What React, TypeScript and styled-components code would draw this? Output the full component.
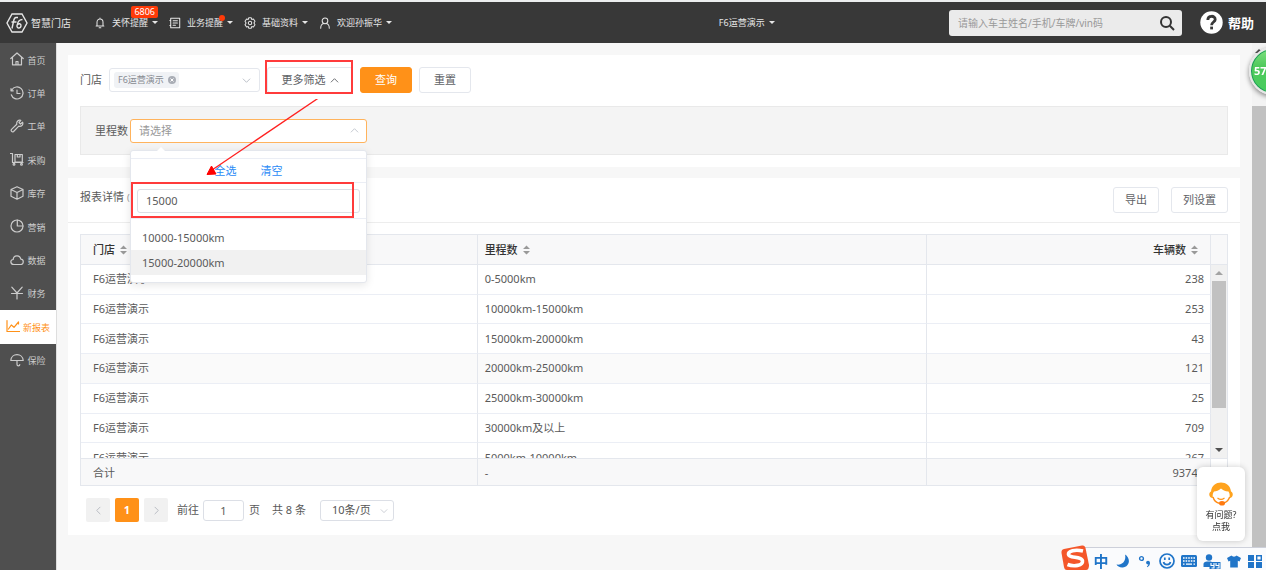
import React from "react";
import styled, { createGlobalStyle, css } from "styled-components";

const ORANGE = "#ff9118";
const BORDER = "#e4e7ed";
const MARK = "#ff3b3b";

const GlobalStyle = createGlobalStyle`
  * { box-sizing: border-box; }
  body {
    margin: 0;
    background: #f7f7f7;
    color: #5a5a5a;
    font-family: "Noto Sans", "Noto Sans CJK SC", sans-serif;
    font-size: 11px;
    line-height: 16px;
  }
  button, input, select { font: inherit; color: inherit; margin: 0; }
  button { cursor: pointer; white-space: nowrap; }
  a { text-decoration: none; color: inherit; }
`;

const Page = styled.div`
  display: flex;
  flex-direction: column;
  min-height: 100vh;
  overflow: hidden;
`;

/* ---------- top bar ---------- */

const TopBar = styled.header`
  display: flex;
  align-items: center;
  height: 43px;
  padding: 0 12px 0 6px;
  border-top: 2px solid #eceeef;
  background: #383838;
  color: #e6e6e6;
  font-size: 9px;
`;

const Brand = styled.a`
  display: flex;
  align-items: center;
  gap: 3px;
  width: 88px;
  font-size: 10px;
`;

const TopNav = styled.nav`
  display: flex;
  gap: 11px;
`;

const TopItem = styled.button`
  position: relative;
  display: flex;
  align-items: center;
  padding: 0;
  border: 0;
  background: none;
  svg:first-child { margin-right: 6px; }
`;

const Caret = styled.span`
  margin-left: 4px;
  border: 3px solid transparent;
  border-top-color: currentColor;
  border-bottom: 0;
`;

const CountBadge = styled.span`
  position: absolute;
  top: -9px;
  right: 0;
  padding: 0 3px;
  border-radius: 2px;
  background: #ff3a08;
  color: #fff;
  font-size: 9px;
  line-height: 12px;
`;

const DotBadge = styled.span`
  position: absolute;
  top: 0;
  right: 8px;
  width: 6px;
  height: 6px;
  border-radius: 50%;
  background: #ff3a08;
`;

const Spacer = styled.div<{ $grow: number }>`
  flex: ${(p) => p.$grow} 1 0;
`;

const SearchBox = styled.form`
  display: flex;
  align-items: center;
  width: 233px;
  height: 26px;
  margin-right: 18px;
  padding: 0 7px 0 9px;
  border-radius: 3px;
  background: #ebebeb;
  input {
    flex: 1;
    min-width: 0;
    padding: 0;
    border: 0;
    outline: 0;
    background: none;
    color: #333;
    font-size: 10px;
    &::placeholder { color: #999; opacity: 1; }
  }
  button {
    display: flex;
    padding: 0;
    border: 0;
    background: none;
    color: #333;
  }
`;

const Help = styled.a`
  display: flex;
  align-items: center;
  gap: 5px;
  color: #fff;
  font-size: 13px;
  font-weight: 700;
`;

/* ---------- frame ---------- */

const Body = styled.div`
  display: flex;
  flex: 1;
`;

const Sidebar = styled.aside`
  flex: none;
  width: 57px;
  border-right: 1px solid #dedede;
  background: #4f4f4f;
`;

const SideNav = styled.nav`
  display: grid;
  grid-auto-rows: 1fr;
  height: 334px;
`;

const SideLink = styled.a<{ $active?: boolean }>`
  display: flex;
  align-items: center;
  justify-content: center;
  gap: 3px;
  padding-top: 2px;
  color: #ccc;
  font-size: 9px;
  svg { flex: none; margin-bottom: 3px; }
  ${(p) => p.$active && css`background: #fff; color: ${ORANGE};`}
`;

const Main = styled.main`
  display: flex;
  flex: 1;
  flex-direction: column;
  gap: 11px;
  min-width: 0;
  padding: 12px 12px 35px 11px;
`;

const PageScroll = styled.div`
  display: flex;
  flex: none;
  flex-direction: column;
  width: 14px;
  background: #f3f3f3;
`;

const PageScrollTop = styled.div`
  height: 63px;
  padding: 6px 3px;
  &::before {
    content: "";
    display: block;
    width: 0;
    border: 4px solid transparent;
    border-top: 0;
    border-bottom-color: #505050;
  }
`;

const PageThumb = styled.div`
  flex: 1;
  background: #c1c1c1;
`;

const Card = styled.section`
  background: #fff;
`;

/* ---------- filters ---------- */

const FilterCard = styled(Card)`
  padding: 12px;
`;

const FilterRow = styled.div`
  display: flex;
  align-items: center;
  gap: 7px;
  margin-bottom: 13px;
`;

const StoreSelect = styled.div`
  display: flex;
  align-items: center;
  justify-content: space-between;
  width: 151px;
  height: 24px;
  padding: 0 8px 0 4px;
  border: 1px solid ${BORDER};
  border-radius: 3px;
  color: #b5bac3;
`;

const Tag = styled.span`
  display: flex;
  align-items: center;
  gap: 4px;
  height: 16px;
  padding: 0 3px 0 4px;
  border-radius: 3px;
  background: #f0f2f5;
  color: #878b92;
  font-size: 9px;
  button {
    display: flex;
    padding: 0;
    border: 0;
    background: none;
  }
`;

const Button = styled.button<{ $primary?: boolean; $width: number }>`
  position: relative;
  display: flex;
  align-items: center;
  justify-content: center;
  gap: 4px;
  width: ${(p) => p.$width}px;
  height: 26px;
  padding: 0;
  border: 1px solid ${(p) => (p.$primary ? ORANGE : BORDER)};
  border-radius: 3px;
  background: ${(p) => (p.$primary ? ORANGE : "#fff")};
  color: ${(p) => (p.$primary ? "#fff" : "#606266")};
`;

const MarkBox = styled.span<{ $inset: string }>`
  position: absolute;
  inset: ${(p) => p.$inset};
  border: 2px solid ${MARK};
  pointer-events: none;
`;

const MarkArrow = styled.svg`
  position: absolute;
  top: -20px;
  left: 76px;
  z-index: 5;
  pointer-events: none;
`;

const MorePanel = styled.div`
  display: flex;
  align-items: center;
  gap: 2px;
  height: 49px;
  padding: 0 14px;
  border: 1px solid #e9e9e9;
  background: #f4f4f4;
`;

const Picker = styled.div`
  position: relative;
  width: 237px;
`;

const PickerField = styled.div`
  display: flex;
  align-items: center;
  height: 24px;
  padding: 0 7px 0 8px;
  border: 1px solid #ffb35c;
  border-radius: 3px;
  background: #fff;
  color: #c0c4cc;
  input {
    flex: 1;
    min-width: 0;
    padding: 0;
    border: 0;
    outline: 0;
    background: none;
    &::placeholder { color: #999; opacity: 1; }
  }
`;

const Popup = styled.div`
  position: absolute;
  top: 31px;
  left: 0;
  z-index: 3;
  width: 237px;
  padding: 7px 0;
  border: 1px solid ${BORDER};
  border-radius: 3px;
  background: #fff;
  box-shadow: 0 2px 9px rgba(0, 0, 0, 0.1);
  &::before {
    content: "";
    position: absolute;
    top: -4px;
    left: 26px;
    border: 4px solid transparent;
    border-top: 0;
    border-bottom-color: #fff;
  }
`;

const PopupActions = styled.div`
  display: flex;
  justify-content: center;
  gap: 24px;
  padding: 4px 0 3px;
  border: 1px solid #ebeef5;
  border-width: 1px 0;
  button {
    padding: 0;
    border: 0;
    background: none;
    color: #2a8af6;
  }
`;

const PopupSearch = styled.div`
  position: relative;
  padding: 6px 6px 5px;
  border-bottom: 1px solid #ebeef5;
  input {
    width: 100%;
    height: 24px;
    padding: 0 8px;
    border: 1px solid #dcdfe6;
    border-radius: 3px;
    outline: 0;
  }
`;

const OptionList = styled.ul`
  margin: 0;
  padding: 6px 0 0;
  list-style: none;
`;

const Option = styled.li<{ $hover?: boolean }>`
  padding: 0 11px;
  background: ${(p) => (p.$hover ? "#f1f1f1" : "none")};
  line-height: 25px;
`;

/* ---------- report ---------- */

const ReportHead = styled.div`
  display: flex;
  align-items: center;
  gap: 12px;
  height: 45px;
  padding: 0 12px;
  border-bottom: 1px solid #ededed;
`;

const ReportTitle = styled.h2`
  flex: 1;
  margin: 0;
  padding-bottom: 6px;
  font-size: 11px;
  font-weight: 400;
  small { color: #999; font-size: 9px; }
`;

const ReportBody = styled.div`
  padding: 11px 12px 12px;
`;

const Grid = styled.div`
  border: 1px solid ${BORDER};
`;

const GridPart = styled.div<{ $height: number; $shaded?: boolean; $line?: boolean }>`
  display: flex;
  align-items: flex-start;
  height: ${(p) => p.$height}px;
  overflow: hidden;
  border-bottom: ${(p) => (p.$line ? 1 : 0)}px solid ${BORDER};
  background: ${(p) => (p.$shaded ? "#f8f8f9" : "#fff")};
`;

const Table = styled.table<{ $height: number }>`
  flex: 1;
  width: 0;
  height: ${(p) => p.$height}px;
  table-layout: fixed;
  border-collapse: separate;
  border-spacing: 0;
  th, td {
    padding: 0 6px 0 12px;
    border-right: 1px solid ${BORDER};
    text-align: left;
    font-weight: 400;
  }
  th { color: #333; font-weight: 500; }
  td + td, th + th { padding-left: 7px; }
  th:last-child, td:last-child { text-align: right; }
  th:last-child { padding-right: 12px; }
  tbody td { border-bottom: 1px solid #ebeef5; }
  tbody tr:nth-child(4) { background: #fafafa; }
`;

const Sort = styled.svg`
  margin-left: 5px;
  vertical-align: -1px;
`;

const Gutter = styled.div<{ $plain?: boolean }>`
  flex: none;
  align-self: stretch;
  width: 16px;
  background: ${(p) => (p.$plain ? "#fff" : "none")};
`;

const InnerScroll = styled(Gutter)`
  display: flex;
  flex-direction: column;
  align-items: center;
  background: #f1f1f1;
`;

const ScrollArrow = styled.span<{ $down?: boolean }>`
  display: flex;
  align-items: center;
  height: 16px;
  &::before {
    content: "";
    border: 4px solid transparent;
    ${(p) => (p.$down
      ? css`border-top-color: #505050; border-bottom: 0;`
      : css`border-bottom-color: #a3a3a3; border-top: 0;`)}
  }
`;

const InnerThumb = styled.div`
  width: 14px;
  height: 127px;
  margin-bottom: auto;
  background: #c1c1c1;
`;

const Pager = styled.div`
  display: flex;
  align-items: center;
  gap: 5px;
  padding: 12px 6px 1px;
  label { display: flex; align-items: center; gap: 4px; margin-left: 4px; }
`;

const PageButton = styled.button<{ $current?: boolean }>`
  display: flex;
  align-items: center;
  justify-content: center;
  width: 24px;
  height: 24px;
  padding: 0;
  border: 0;
  border-radius: 2px;
  background: ${(p) => (p.$current ? ORANGE : "#f1f1f1")};
  color: ${(p) => (p.$current ? "#fff" : "#b4b8bf")};
  font-weight: 700;
`;

const PageInput = styled.input`
  width: 41px;
  height: 21px;
  padding: 0;
  border: 1px solid #dcdfe6;
  border-radius: 3px;
  text-align: center;
`;

const Total = styled.span`
  margin: 0 9px 0 7px;
`;

const SizeSelect = styled.div`
  position: relative;
  color: #c0c4cc;
  select {
    width: 74px;
    height: 21px;
    padding: 0 0 0 11px;
    border: 1px solid #dcdfe6;
    border-radius: 3px;
    background: #fff;
    color: #555;
    appearance: none;
  }
  svg { position: absolute; top: 7px; right: 6px; }
`;

/* ---------- floating parts ---------- */

const Ball = styled.div`
  position: fixed;
  top: 47px;
  right: -31px;
  z-index: 6;
  width: 48px;
  height: 48px;
  padding-left: 3px;
  border: 2px solid #e6e6e6;
  border-radius: 50%;
  background: linear-gradient(#7fe07f, #4fc95c 40%, #46cd5e);
  box-shadow: inset 0 0 0 1px #1d9a5a, 0 2px 5px rgba(0, 0, 0, 0.45);
  color: #fff;
  font-weight: 700;
  line-height: 44px;
`;

const Assistant = styled.button`
  position: fixed;
  right: 21px;
  bottom: 29px;
  z-index: 6;
  width: 48px;
  height: 74px;
  padding: 10px 0 4px;
  border: 0;
  border-radius: 6px;
  background: #fff;
  box-shadow: 0 0 6px rgba(0, 0, 0, 0.2);
  color: #333;
  font-size: 9px;
  line-height: 12px;
  svg { display: block; margin: 0 auto 3px; }
  span { display: block; }
`;

const ImeBar = styled.div`
  position: fixed;
  right: 0;
  bottom: 0;
  z-index: 7;
  display: flex;
  align-items: flex-end;
  color: #1f74c8;
`;

const ImeLogo = styled.svg`
  position: relative;
  z-index: 1;
`;

const ImeKeys = styled.div`
  display: flex;
  align-items: center;
  height: 23px;
  margin-left: -8px;
  padding: 4px 0 0 9px;
  border-top: 1px solid #cdd0da;
  background: #fafbfd;
`;

const ImeKey = styled.span<{ $width?: number }>`
  display: flex;
  align-items: center;
  justify-content: center;
  width: ${(p) => p.$width ?? 22}px;
  height: 18px;
  font-size: 15px;
  font-weight: 700;
`;

/* ---------- icons ---------- */

type IconProps = { size?: number; children: React.ReactNode };
const Line = ({ size = 14, children }: IconProps) => (
  <svg width={size} height={size} viewBox="0 0 14 14" fill="none" stroke="currentColor"
    strokeWidth="1.2" strokeLinecap="round" strokeLinejoin="round" aria-hidden="true">
    {children}
  </svg>
);

const Chevron = ({ up, size = 9 }: { up?: boolean; size?: number }) => (
  <svg width={size} height={size} viewBox="0 0 10 10" fill="none" stroke="currentColor" aria-hidden="true">
    <path d={up ? "M1 7L5 3L9 7" : "M1 3L5 7L9 3"} />
  </svg>
);

const SortMark = () => (
  <Sort width="7" height="10" viewBox="0 0 7 10" fill="#999" aria-hidden="true">
    <path d="M3.5 0.5L7 4H0ZM3.5 9.5L0 6H7Z" />
  </Sort>
);

const menu: { label: string; active?: boolean; icon: React.ReactNode }[] = [
  { label: "首页", icon: <path d="M0.8 6.5L7 1L13.2 6.5M2.5 5.5V12.8H11.5V5.5M6 12.5V9.5H8V12.5" /> },
  { label: "订单", icon: <path d="M1.8 4A6 6 0 1 1 1.3 8.8M1 2.5V4.8H3.3M7 4V7.5H10" /> },
  { label: "工单", icon: <path d="M12.6 3.2L10.5 5L9 3.6L10.8 1.4C8.5 0.6 6.2 2.5 6.8 5.2L1.5 10.4C0.4 11.8 2.2 13.6 3.6 12.5L8.8 7.2C11.6 7.8 13.5 5.5 12.6 3.2Z" /> },
  { label: "采购", icon: <><path d="M0.5 1.5H2.5V10.5H13M5 2.5H12.3V10H5ZM7.3 2.5V5H10V2.5" /><circle cx="4" cy="12.2" r="0.9" /><circle cx="11.5" cy="12.2" r="0.9" /></> },
  { label: "库存", icon: <path d="M7 0.8L13 3.5V10.3L7 13.2L1 10.3V3.5ZM1 3.5L7 6.5L13 3.5M7 6.5V13" /> },
  { label: "营销", icon: <><circle cx="7" cy="7" r="6" /><path d="M7.3 1V7H13" /></> },
  { label: "数据", icon: <path d="M3.8 11.5C0.2 11.5 -0.2 7 3.2 6.5C3.4 1.8 10 1.4 10.8 6.2C14.2 6.5 14 11.5 10.6 11.5Z" /> },
  { label: "财务", icon: <path d="M1.8 1.2L7 7L12.2 1.2M7 7V13M1.5 7.5H12.5" /> },
  { label: "新报表", active: true, icon: <path d="M1 1.5V12.5H13.5M2.5 10L5.3 6L8 8.3L12.5 3M12.5 3V5" /> },
  { label: "保险", icon: <path d="M0.8 7.5C1.2 -0.3 12.8 -0.3 13.2 7.5ZM7 7.5V11.5C7 13.4 9.8 13.4 9.8 11.5" /> },
];

const rows: [string, string][] = [
  ["0-5000km", "238"],
  ["10000km-15000km", "253"],
  ["15000km-20000km", "43"],
  ["20000km-25000km", "121"],
  ["25000km-30000km", "25"],
  ["30000km及以上", "709"],
  ["5000km-10000km", "267"],
];

const Columns = () => (
  <colgroup>
    <col style={{ width: "35.1%" }} />
    <col style={{ width: "39.8%" }} />
    <col />
  </colgroup>
);

const Header = () => (
  <TopBar>
    <Brand href="#">
      <svg width="22" height="20" viewBox="0 0 22 20" fill="none" stroke="currentColor" strokeWidth="1.4" aria-hidden="true">
        <path d="M6 1H16L21 10L16 19H6L1 10Z" />
        <path d="M12 4.5H10C8.6 4.5 8 6 7.6 8L6 15.5M5.5 9H10.5M16.5 6.5C13 6.5 11.5 9.5 11 12.5C10.6 15.8 14.6 15.6 15 12.8C15.3 10.4 12.4 10 11.4 12" />
      </svg>
      智慧门店
    </Brand>
    <TopNav>
      <TopItem>
        <Line size={12}><path d="M3.5 10.5V6C3.5 1.2 10.5 1.2 10.5 6V10.5ZM2.5 10.5H11.5M6 12.5H8M7 1.2V2.2" /></Line>
        关怀提醒<Caret />
        <CountBadge>6806</CountBadge>
      </TopItem>
      <TopItem>
        <Line size={12}><path d="M2 1.5H12.5V12.5H2ZM4.8 4.5H9.8M4.8 7H9.8M4.8 9.5H7.5M2 4H1M2 10H1" /></Line>
        业务提醒<Caret />
        <DotBadge />
      </TopItem>
      <TopItem>
        <Line size={12}>
          <path d="M5.5 1H8.5L9 2.8L11 2.3L12.8 5L11.6 7L12.8 9L11 11.7L9 11.2L8.5 13H5.5L5 11.2L3 11.7L1.2 9L2.4 7L1.2 5L3 2.3L5 2.8Z" />
          <circle cx="7" cy="7" r="2" />
        </Line>
        基础资料<Caret />
      </TopItem>
      <TopItem>
        <Line size={12}><circle cx="7" cy="4.5" r="3.3" /><path d="M2 13C2 9.5 4 7.8 5.5 7.5M12 13C12 9.5 10 7.8 8.5 7.5" /></Line>
        欢迎孙振华<Caret />
      </TopItem>
    </TopNav>
    <Spacer $grow={15} />
    <TopItem>F6运营演示<Caret /></TopItem>
    <Spacer $grow={8} />
    <SearchBox onSubmit={(e) => e.preventDefault()}>
      <input aria-label="搜索" placeholder="请输入车主姓名/手机/车牌/vin码" />
      <button aria-label="查找">
        <svg width="16" height="16" viewBox="0 0 16 16" fill="none" stroke="currentColor" strokeWidth="2" aria-hidden="true">
          <circle cx="7" cy="7" r="5" /><path d="M10.8 10.8L15 15" />
        </svg>
      </button>
    </SearchBox>
    <Help href="#">
      <svg width="23" height="23" viewBox="0 0 23 23" aria-hidden="true">
        <circle cx="11.5" cy="11.5" r="11.2" fill="#fff" />
        <path d="M7.8 9C7.8 4 15.4 4.2 15.2 8.6C15.1 11 11.6 11.2 11.6 14.2" fill="none" stroke="#383838" strokeWidth="2.8" />
        <path d="M10.2 15.6H13V18.4H10.2Z" fill="#383838" />
      </svg>
      帮助
    </Help>
  </TopBar>
);

const Filters = () => (
  <FilterCard>
    <FilterRow>
      <span>门店</span>
      <StoreSelect role="group" aria-label="门店">
        <Tag>
          F6运营演示
          <button aria-label="移除">
            <svg width="8" height="8" viewBox="0 0 8 8" aria-hidden="true">
              <circle cx="4" cy="4" r="4" fill="#a9adb5" />
              <path d="M2.5 2.5L5.5 5.5M5.5 2.5L2.5 5.5" stroke="#fff" />
            </svg>
          </button>
        </Tag>
        <Chevron />
      </StoreSelect>
      <Button $width={86}>
        更多筛选<Chevron up />
        <MarkBox $inset="-8px -1px -2px -3px" />
      </Button>
      <Button $width={52} $primary>查询</Button>
      <Button $width={52}>重置</Button>
    </FilterRow>
    <MorePanel>
      <label htmlFor="mileage">里程数</label>
      <Picker>
        <PickerField>
          <input id="mileage" placeholder="请选择" readOnly />
          <Chevron up />
        </PickerField>
        <Popup>
          <PopupActions>
            <button>全选</button>
            <button>清空</button>
          </PopupActions>
          <PopupSearch>
            <input aria-label="筛选选项" defaultValue="15000" />
            <MarkBox $inset="-1px 12px 0 0" />
          </PopupSearch>
          <OptionList>
            <Option>10000-15000km</Option>
            <Option $hover>15000-20000km</Option>
          </OptionList>
        </Popup>
        <MarkArrow width="114" height="78" viewBox="0 0 114 78" aria-hidden="true">
          <path d="M112.5 -1L6 71" stroke="#ff2020" strokeWidth="1.3" />
          <path d="M1 75.5L5.5 67L10 75Z" fill="#ff0000" stroke="#ff0000" />
        </MarkArrow>
      </Picker>
    </MorePanel>
  </FilterCard>
);

const Report = () => (
  <Card>
    <ReportHead>
      <ReportTitle>报表详情 <small>(旧</small></ReportTitle>
      <Button $width={46}>导出</Button>
      <Button $width={57}>列设置</Button>
    </ReportHead>
    <ReportBody>
      <Grid>
        <GridPart $height={30} $shaded $line>
          <Table $height={29}>
            <Columns />
            <thead>
              <tr>
                <th>门店<SortMark /></th>
                <th>里程数<SortMark /></th>
                <th>车辆数<SortMark /></th>
              </tr>
            </thead>
          </Table>
          <Gutter />
        </GridPart>
        <GridPart $height={194} $line>
          <Table $height={208}>
            <Columns />
            <tbody>
              {rows.map(([range, count]) => (
                <tr key={range}>
                  <td>F6运营演示</td>
                  <td>{range}</td>
                  <td>{count}</td>
                </tr>
              ))}
            </tbody>
          </Table>
          <InnerScroll>
            <ScrollArrow />
            <InnerThumb />
            <ScrollArrow $down />
          </InnerScroll>
        </GridPart>
        <GridPart $height={26} $shaded>
          <Table $height={27}>
            <Columns />
            <tfoot>
              <tr>
                <td>合计</td>
                <td>-</td>
                <td>93743</td>
              </tr>
            </tfoot>
          </Table>
          <Gutter $plain />
        </GridPart>
      </Grid>
      <Pager>
        <PageButton aria-label="上一页">
          <svg width="9" height="9" viewBox="0 0 10 10" fill="none" stroke="currentColor"><path d="M7 1L3 5L7 9" /></svg>
        </PageButton>
        <PageButton $current>1</PageButton>
        <PageButton aria-label="下一页">
          <svg width="9" height="9" viewBox="0 0 10 10" fill="none" stroke="currentColor"><path d="M3 1L7 5L3 9" /></svg>
        </PageButton>
        <label>前往<PageInput defaultValue="1" /></label>
        <span>页</span>
        <Total>共 8 条</Total>
        <SizeSelect>
          <select aria-label="每页条数"><option>10条/页</option></select>
          <Chevron size={8} />
        </SizeSelect>
      </Pager>
    </ReportBody>
  </Card>
);

const Ime = () => (
  <ImeBar>
    <ImeLogo width="28" height="25" viewBox="0 0 28 25" aria-hidden="true">
      <path d="M3 4L21 0.5C23 0.2 24 1 24.5 3L28 20C28 23 27 25 25 25H6C4 25 3.5 24 3 22L0.5 8C0.3 5.5 1 4.5 3 4Z" fill="#f4572a" />
      <path d="M22 6C14 4 7 6 7.5 9.5C8 13.5 21 11 21.5 16C22 20.5 13 22 6.5 19.5" fill="none" stroke="#fff" strokeWidth="3.6" />
    </ImeLogo>
    <ImeKeys>
      <ImeKey>中</ImeKey>
      <ImeKey>
        <svg width="14" height="14" viewBox="0 0 14 14" fill="currentColor"><path d="M9 0.5C15 4 14 13 6.5 13.5C3.5 13.6 1.5 12.2 0.5 10.5C6.5 11.5 10.5 6.5 9 0.5Z" /></svg>
      </ImeKey>
      <ImeKey>
        <svg width="14" height="14" viewBox="0 0 14 14" fill="currentColor"><circle cx="3.5" cy="4.5" r="1.9" fill="none" stroke="currentColor" strokeWidth="1.4" /><circle cx="10" cy="8.6" r="1.9" /><path d="M11.8 8.2C12.3 10.5 11.3 12.2 9.3 13.2L8.9 12.4C10 11.6 10.4 11 10.2 10Z" /></svg>
      </ImeKey>
      <ImeKey>
        <svg width="16" height="16" viewBox="0 0 16 16" fill="none" stroke="currentColor" strokeWidth="1.7"><circle cx="8" cy="8" r="7" /><path d="M4.5 9C5.5 12.5 10.5 12.5 11.5 9M5.8 4.5V7M10.2 4.5V7" /></svg>
      </ImeKey>
      <ImeKey>
        <svg width="16" height="12" viewBox="0 0 16 12"><rect width="16" height="12" rx="1.5" fill="currentColor" /><path d="M2 3H14M2 6H14" stroke="#fff" strokeWidth="1.4" strokeDasharray="1.6 1" /><path d="M2 9.2H3.5M5 9.2H11M12.5 9.2H14" stroke="#fff" strokeWidth="1.3" /></svg>
      </ImeKey>
      <ImeKey $width={24}>
        <svg width="18" height="15" viewBox="0 0 18 15" fill="currentColor"><circle cx="6" cy="3.5" r="3.2" /><path d="M0.5 13V10C0.5 8.5 2 7.5 4 7.5H8L10 9V13Z" /><path d="M6.5 8H17.5V15H6.5Z" /><path d="M8 9V11.5H11V9M11 11.5V14H8.5M13 9V11.5H16V9M16 11.5V14H13.5" fill="none" stroke="#fff" strokeWidth="1.1" /></svg>
      </ImeKey>
      <ImeKey $width={20}>
        <svg width="14" height="13" viewBox="0 0 14 13" fill="currentColor"><path d="M4.5 0.5C5.5 2 8.5 2 9.5 0.5L14 3L12.5 6.5L10.8 5.8V12.5H3.2V5.8L1.5 6.5L0 3Z" /></svg>
      </ImeKey>
      <ImeKey>
        <svg width="14" height="13" viewBox="0 0 14 13" fill="currentColor"><path d="M0 0H6V6H0ZM0 7H6V13H0ZM8 7H14V13H8Z" /><path d="M8.7 0.7H13.3V5.3H8.7Z" fill="none" stroke="currentColor" strokeWidth="1.4" /></svg>
      </ImeKey>
    </ImeKeys>
  </ImeBar>
);

export default function App() {
  return (
    <Page>
      <GlobalStyle />
      <Header />
      <Body>
        <Sidebar>
          <SideNav>
            {menu.map((m) => (
              <SideLink key={m.label} href="#" $active={m.active}>
                <Line>{m.icon}</Line>
                {m.label}
              </SideLink>
            ))}
          </SideNav>
        </Sidebar>
        <Main>
          <Filters />
          <Report />
        </Main>
        <PageScroll>
          <PageScrollTop />
          <PageThumb />
        </PageScroll>
      </Body>
      <Ball>57</Ball>
      <Assistant>
        <svg width="26" height="25" viewBox="0 0 26 25" fill="none" aria-hidden="true">
          <path d="M5 17C1 17 0 12 3 10.500C4 -1.500 22 -1.500 23 10.500C26 12 25 17 21.500 17C22 14 21.500 12 20.500 10.500C17 10.500 14.500 9 13 7.500C11 9.500 8 10.500 6 10.500C4.500 12.500 4.500 14.500 5 17Z" fill="#ffa31e" />
          <path d="M5 16C6 19.500 8 21.500 11 22.300M21.700 16C20.700 19 18.500 21 16 22" stroke="#ff8d18" strokeWidth="1.400" />
          <path d="M9.500 17C11.500 18.600 14.500 18.600 16.500 17" stroke="#ff9418" strokeWidth="1.100" />
          <ellipse cx="14" cy="22.300" rx="3" ry="2.300" fill="#ff7a10" />
        </svg>
        <span>有问题?</span>
        <span>点我</span>
      </Assistant>
      <Ime />
    </Page>
  );
}
